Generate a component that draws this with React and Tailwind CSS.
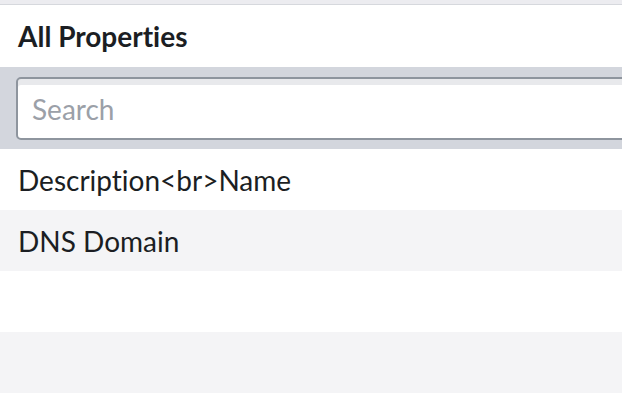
import React from "react";

const rows = ["Description<br>Name", "DNS Domain", "", ""];

export default function App() {
  return (
    <div className="w-[622px] h-[414px] overflow-hidden bg-white font-['Lato','Liberation_Sans',sans-serif] [font-variant-ligatures:none] text-[#1b1e23]">
      <div className="h-[5px] bg-[#ececf0] border-b border-[#d6d8dd]"></div>
      <div className="h-[62px] flex items-center px-[18px]">
        <h2 className="text-[28px] font-bold">All Properties</h2>
      </div>
      <div className="bg-[#d3d6dd] pt-[10px] pb-[9px] pl-[16px]">
        <input
          type="text"
          placeholder="Search"
          className="w-[640px] h-[63px] rounded-[5px] border-2 border-[#8e959e] bg-white px-[14px] text-[28px] shadow-[inset_0_6px_0_#e8e9ec] placeholder:text-[#9ba0a8] outline-none"
        />
      </div>
      {rows.map((r, i) => (
        <div
          key={i}
          className={`h-[61px] flex items-center px-[18px] text-[28px] ${i % 2 === 1 ? "bg-[#f4f4f6]" : "bg-white"}`}
        >
          {r}
        </div>
      ))}
    </div>
  );
}
